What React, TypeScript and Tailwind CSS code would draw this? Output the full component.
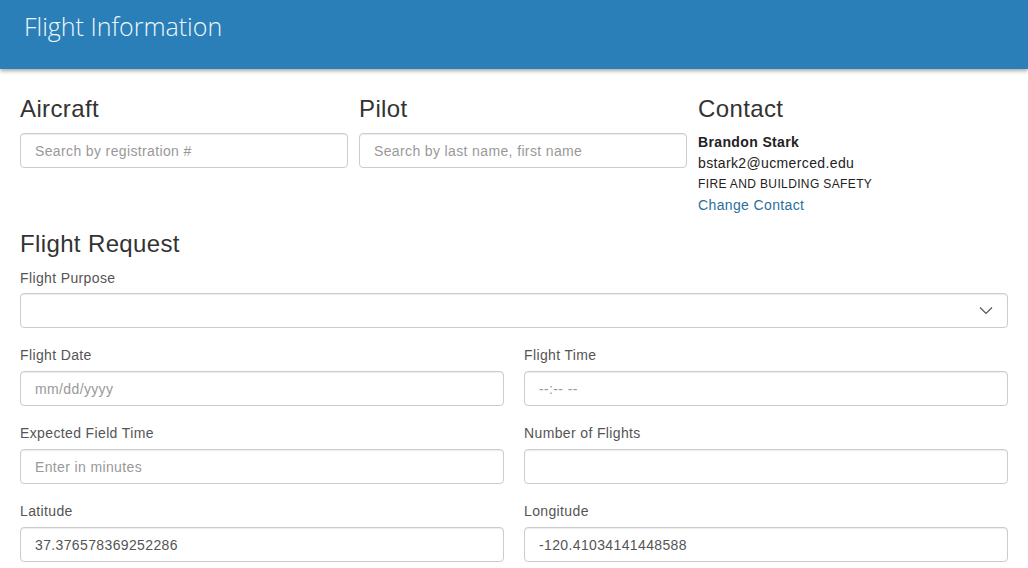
import React from 'react';

const Field: React.FC<{ label: string; placeholder?: string; value?: string }> = ({ label, placeholder, value }) => (
  <div className="mb-[17px]">
    <label className="block h-5 text-[14px] leading-5 text-[#555] mb-[6px]">{label}</label>
    <input
      readOnly
      placeholder={placeholder}
      value={value ?? ''}
      className="block w-full h-[35px] px-[14px] rounded border border-[#ccc] text-[14px] text-[#555] placeholder:text-[#999] shadow-[inset_0_1px_1px_rgba(0,0,0,0.075)] outline-none"
    />
  </div>
);

const SearchBox: React.FC<{ placeholder: string }> = ({ placeholder }) => (
  <input
    readOnly
    placeholder={placeholder}
    className="block w-full h-[35px] px-[14px] rounded border border-[#ccc] text-[14px] text-[#555] placeholder:text-[#999] shadow-[inset_0_1px_1px_rgba(0,0,0,0.075)] outline-none"
  />
);

export default function App() {
  return (
    <div className="min-h-screen bg-white [font-family:'Liberation_Sans',Arial,sans-serif] tracking-[0.023em] text-[#333]">
      {/* Header */}
      <div className="h-[69px] bg-[#2a7fb8] shadow-[0_2px_4px_rgba(0,0,0,0.35)] pl-6 pt-[10px]">
        <h1 className="[font-family:'Open_Sans',sans-serif] font-light tracking-normal text-[25px] leading-8 text-[#eef7fb]">Flight Information</h1>
      </div>

      <div className="px-5 pt-[24px]">
        {/* Top row */}
        <div className="grid grid-cols-[328px_328px_1fr] gap-x-[11px]">
          <div>
            <h2 className="text-[24px] leading-8 mb-[8px]">Aircraft</h2>
            <SearchBox placeholder="Search by registration #" />
          </div>
          <div>
            <h2 className="text-[24px] leading-8 mb-[8px]">Pilot</h2>
            <SearchBox placeholder="Search by last name, first name" />
          </div>
          <div>
            <h2 className="text-[24px] leading-8 mb-[7px]">Contact</h2>
            <div className="text-[14px] leading-[21px] font-bold text-[#222]">Brandon Stark</div>
            <div className="text-[14px] leading-[21px] text-[#222]">bstark2@ucmerced.edu</div>
            <div className="text-[12px] leading-[21px] text-[#222]">FIRE AND BUILDING SAFETY</div>
            <a className="block text-[14px] leading-[21px] text-[#2b6f9c]" href="#">Change Contact</a>
          </div>
        </div>

        {/* Flight Request */}
        <h2 className="text-[24px] leading-8 mt-[12px] mb-[8px]">Flight Request</h2>
        <div className="mb-[17px]">
          <label className="block h-5 text-[14px] leading-5 text-[#555] mb-[5px]">Flight Purpose</label>
          <div className="relative h-[35px] w-full rounded border border-[#ccc] shadow-[inset_0_1px_1px_rgba(0,0,0,0.075)]">
            <svg className="absolute right-[14px] top-[12px]" width="14" height="9" viewBox="0 0 14 9" fill="none">
              <path d="M1 1.5 L7 7.5 L13 1.5" stroke="#555" strokeWidth="1.2" />
            </svg>
          </div>
        </div>

        <div className="grid grid-cols-2 gap-x-5">
          <Field label="Flight Date" placeholder="mm/dd/yyyy" />
          <Field label="Flight Time" placeholder="--:-- --" />
          <Field label="Expected Field Time" placeholder="Enter in minutes" />
          <Field label="Number of Flights" />
          <Field label="Latitude" value="37.376578369252286" />
          <Field label="Longitude" value="-120.41034141448588" />
        </div>
      </div>
    </div>
  );
}
